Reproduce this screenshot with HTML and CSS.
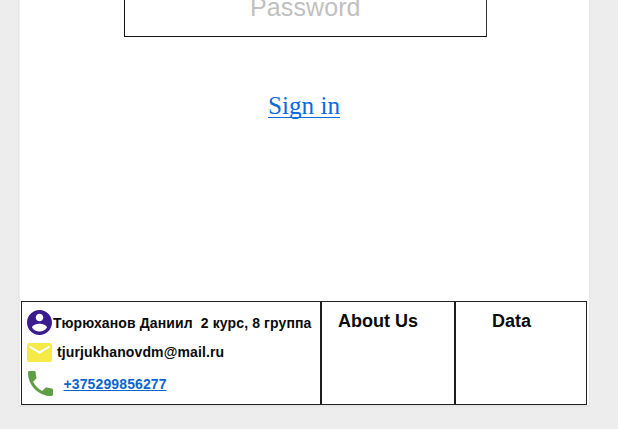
FILE: index.html
```
<!DOCTYPE html>
<html lang="ru">
<head>
<meta charset="utf-8">
<title>Sign in</title>
<link rel="stylesheet" href="styles.css">
</head>
<body>
<main class="card">
  <div class="field">Password</div>
  <a class="signin" href="#">Sign in</a>
  <footer class="footer">
    <section class="contacts">
      <div class="row row-name">
        <svg class="icon" viewBox="2 2 20 20"><path fill="#3b1c8f" d="M12 2C6.480 2 2 6.480 2 12s4.480 10 10 10 10-4.480 10-10S17.520 2 12 2zm0 3c1.660 0 3 1.340 3 3s-1.340 3-3 3-3-1.340-3-3 1.340-3 3-3zm0 14.200c-2.500 0-4.710-1.280-6-3.220.030-1.990 4-3.080 6-3.080 1.990 0 5.970 1.090 6 3.080-1.290 1.940-3.500 3.220-6 3.220z"/></svg>
        <span class="name">Тюрюханов Даниил&nbsp; 2 курс, 8 группа</span>
      </div>
      <div class="row row-mail">
        <svg class="icon icon-mail" viewBox="2 4 20 16" preserveAspectRatio="none"><path fill="#f5ea48" d="M20 4H4c-1.100 0-1.990.9-1.990 2L2 18c0 1.100.9 2 2 2h16c1.100 0 2-.9 2-2V6c0-1.100-.9-2-2-2zm0 4l-8 5-8-5V6l8 5 8-5v2z"/></svg>
        <span class="mail">tjurjukhanovdm@mail.ru</span>
      </div>
      <div class="row row-phone">
        <svg class="icon icon-phone" viewBox="3 3 18 18"><path fill="#5f9e45" d="M6.620 10.790c1.440 2.830 3.760 5.140 6.590 6.590l2.200-2.200c.27-.27.670-.36 1.020-.24 1.120.37 2.330.57 3.570.57.550 0 1 .45 1 1V20c0 .55-.45 1-1 1-9.390 0-17-7.610-17-17 0-.55.45-1 1-1h3.500c.55 0 1 .45 1 1 0 1.250.2 2.450.57 3.570.11.350.030.740-.25 1.020l-2.200 2.200z"/></svg>
        <a class="phone" href="#">+375299856277</a>
      </div>
    </section>
    <section class="about">About Us</section>
    <section class="data">Data</section>
  </footer>
</main>
</body>
</html>
```
FILE: styles.css
```
* { box-sizing: border-box; }

html { overflow: hidden; }

body {
  margin: 0;
  background: #ededed;
  font-family: "Liberation Sans", Arial, sans-serif;
}

.card {
  display: flex;
  flex-direction: column;
  width: 572px;
  height: 407px;
  margin-left: 18px;
  background: #fff;
  border: solid #e5e5e5;
  border-width: 0 1px 2px;
  box-shadow: inset 1px 0 #efefef;
}

.field {
  width: 363px;
  height: 37px;
  margin-left: 105px;
  padding-left: 125px;
  border: 1px solid #111;
  border-top: 0;
  border-right-color: #333;
  font-size: 25px;
  line-height: 14px;
  letter-spacing: 0.1px;
  color: #c0c0c0;
}

.signin {
  align-self: flex-start;
  margin: 53px 0 0 249px;
  height: 28px;
  border-bottom: 1px solid #0a6be0;
  font: 25.200px/32px "Liberation Serif", "Times New Roman", serif;
  color: #0a6be0;
  text-decoration: none;
}

.footer {
  display: grid;
  grid-template-columns: 300px 134px 130px;
  width: 566px;
  height: 104px;
  margin: auto 0 0 2px;
  border: 1px solid #222;
  font-weight: bold;
  color: #0a0a0a;
}

.contacts,
.about {
  border-right: 2px solid #1c1c1c;
}

.contacts { padding: 8px 0 0 4.500px; }

.about,
.data {
  padding: 10px 0 0 16px;
  font-size: 18px;
  line-height: 18px;
  white-space: nowrap;
}

.data { padding-left: 36px; }

.row {
  display: flex;
  align-items: center;
  font-size: 14px;
  letter-spacing: 0.12px;
  white-space: nowrap;
}

.row-name { height: 25px; }
.row-mail { height: 19px; margin-top: 8px; }
.row-phone { height: 25px; margin-top: 9px; }

.icon {
  flex: none;
  width: 25px;
  height: 25px;
}

.icon-mail { height: 19px; }
.icon-phone { margin-left: 1px; }

.name { margin-left: 1.500px; }
.mail { margin: -2px 0 0 5.500px; }

.phone {
  margin-left: 11px;
  color: #0b66cc;
}
```
